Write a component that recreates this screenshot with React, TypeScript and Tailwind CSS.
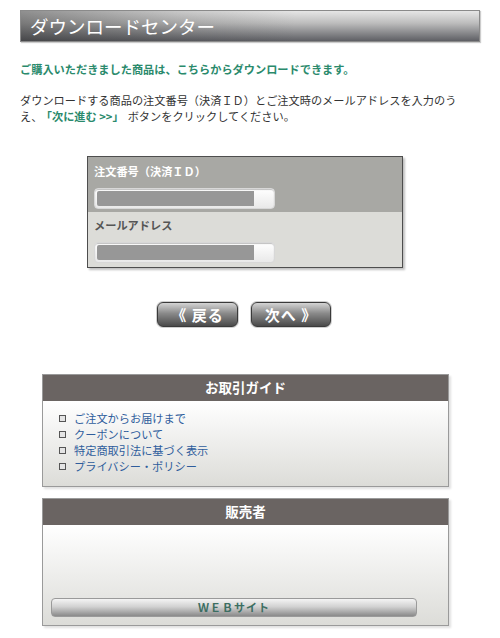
import React from "react";

const jp = { fontFamily: '"Noto Sans CJK JP", "Noto Sans", sans-serif' };

function Input() {
  return (
    <div className="ml-[6px] w-[181px] h-[21px] rounded-[4px] border border-[#d8d8d8] bg-[linear-gradient(to_bottom,#ffffff,#e9e9e9)] p-[2px] flex shadow-[inset_0_1px_1px_rgba(0,0,0,0.25)]">
      <div className="w-[157px] h-full bg-[#979797] rounded-l-[2px]" />
    </div>
  );
}

function NavButton({ children, w }: { children: React.ReactNode; w: string }) {
  return (
    <div className={`${w} h-[25px] rounded-[6px] border border-[#3a3a3a] bg-[linear-gradient(to_bottom,#d4d4d4_0%,#8a8a8a_45%,#4a4a4a_100%)] shadow-[0_0_0_1px_#cfcfcf] flex items-center justify-center text-white font-bold text-[15px] leading-none tracking-[1px]`}>
      {children}
    </div>
  );
}

function Box({ title, children }: { title: string; children: React.ReactNode }) {
  return (
    <div className="ml-[42px] w-[407px] border border-[#9a9a9a] shadow-[2px_2px_2px_rgba(0,0,0,0.12)]">
      <div className="h-[26px] bg-[#6a6462] flex items-center justify-center text-white font-bold text-[13.5px] leading-none">
        {title}
      </div>
      <div className="bg-[linear-gradient(to_bottom,#ffffff,#dcdcd8)]">{children}</div>
    </div>
  );
}

export default function App() {
  const links = ["ご注文からお届けまで", "クーポンについて", "特定商取引法に基づく表示", "プライバシー・ポリシー"];
  return (
    <div className="w-[500px] h-[638px] bg-white overflow-hidden" style={jp}>
      <div className="pt-[10px] px-[20px]">
        <div className="h-[32px] border border-[#8a8a8a] bg-[linear-gradient(to_bottom,#e6e6e6_0%,#bdbdbd_40%,#5e5f64_100%)] shadow-[1px_1px_1px_rgba(0,0,0,0.2)]">
          <div className="h-full bg-[linear-gradient(to_right,rgba(40,40,40,0.45)_0%,rgba(40,40,40,0.15)_35%,rgba(0,0,0,0)_60%)] flex items-center pl-[9px] text-white text-[18.5px] leading-none">
            ダウンロードセンター
          </div>
        </div>
        <p className="mt-[19px] text-[11.2px] leading-[16px] font-bold text-[#2a8a6c]">
          ご購入いただきました商品は、こちらからダウンロードできます。
        </p>
        <p className="mt-[15px] text-[11.2px] leading-[16px] text-[#333333]">
          ダウンロードする商品の注文番号（決済ＩＤ）とご注文時のメールアドレスを入力のう
          <br />
          え、<span className="mx-[4px] font-bold text-[#2a8a6c]">「次に進む &gt;&gt;」</span>ボタンをクリックしてください。
        </p>
      </div>

      <div className="mt-[32px] ml-[87px] w-[316px] border border-[#4e4e4e] shadow-[2px_2px_2px_rgba(0,0,0,0.25)]">
        <div className="h-[55px] bg-[#a8a8a4] pt-[6px]">
          <div className="pl-[6px] text-[11.2px] leading-[16px] font-bold text-white">注文番号（決済ＩＤ）</div>
          <div className="mt-[9px]">
            <Input />
          </div>
        </div>
        <div className="h-[55px] bg-[#dcdcd8] pt-[5px]">
          <div className="pl-[6px] text-[11.2px] leading-[16px] font-bold text-[#555555]">メールアドレス</div>
          <div className="mt-[9px]">
            <Input />
          </div>
        </div>
      </div>

      <div className="mt-[34px] ml-[157px] flex gap-[13px]">
        <NavButton w="w-[81px]">《 戻る</NavButton>
        <NavButton w="w-[80px]">次へ 》</NavButton>
      </div>

      <div className="mt-[47px]">
        <Box title="お取引ガイド">
          <ul className="pt-[9px] pb-[12px] pl-[16px]">
            {links.map((l) => (
              <li key={l} className="flex items-center h-[16px] text-[11.2px] text-[#2f5d9c]">
                <span className="w-[7px] h-[7px] border border-[#555] bg-[#e4e4e4] mr-[8px]" />
                {l}
              </li>
            ))}
          </ul>
        </Box>
      </div>

      <div className="mt-[11px]">
        <Box title="販売者">
          <div className="h-[100px] flex flex-col justify-end pb-[8px] pl-[8px]">
            <div className="w-[366px] h-[19px] rounded-[4px] border border-[#9a9a9a] bg-[linear-gradient(to_bottom,#f4f4f4_0%,#d2d2d2_45%,#8a8a8a_100%)] flex items-center justify-center text-[11px] font-bold text-[#3c6e62] tracking-[1px]">
              ＷＥＢサイト
            </div>
          </div>
        </Box>
      </div>
    </div>
  );
}
